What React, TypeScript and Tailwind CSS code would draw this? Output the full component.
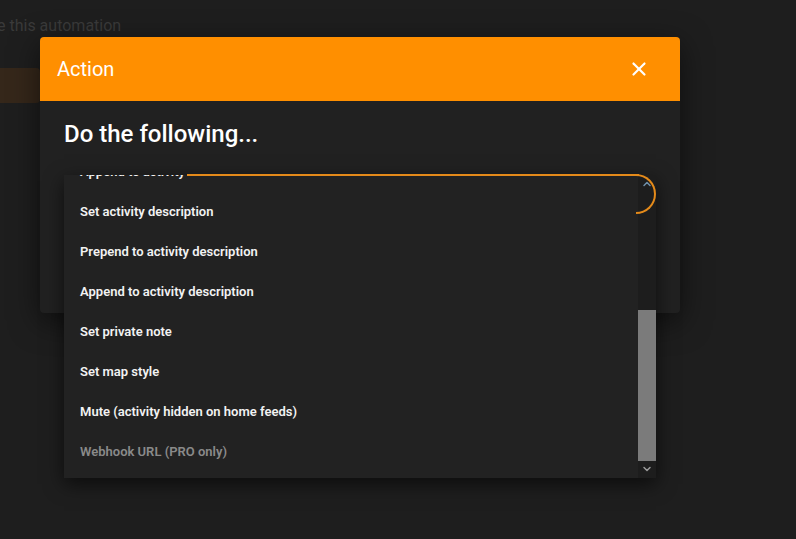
import { X, ChevronDown, ChevronUp } from "lucide-react";

const items = [
  { label: "Append to activity name" },
  { label: "Set activity description" },
  { label: "Prepend to activity description" },
  { label: "Append to activity description" },
  { label: "Set private note" },
  { label: "Set map style" },
  { label: "Mute (activity hidden on home feeds)" },
  { label: "Webhook URL (PRO only)", disabled: true },
];

export default function App() {
  return (
    <div className="relative w-[796px] h-[539px] overflow-hidden bg-[#1e1e1e] font-['Roboto',sans-serif]">
      {/* page behind the dialog, dimmed */}
      <div className="flex flex-col gap-[30px] pt-[14px]">
        <p className="-ml-[3px] text-[16px] text-[#3a3a3a]">e this automation</p>
        <div className="w-[120px] h-[35px] -ml-[80px] flex items-center justify-end pr-[46px] bg-[#35271a] text-[15px] text-[#4a3a28] rounded-sm">
          Save
        </div>
      </div>

      {/* dialog */}
      <div className="absolute left-[40px] top-[37px] w-[640px] rounded-[4px] bg-[#212121] shadow-[0_8px_30px_rgba(0,0,0,0.55)]">
        <div className="flex h-[64px] items-center justify-between rounded-t-[4px] bg-[#ff8f00] pl-[17px] pr-[30px]">
          <span className="text-[20px] text-white">Action</span>
          <X className="text-white" size={22} strokeWidth={2.4} />
        </div>
        <div className="flex flex-col px-[24px] pt-[17px] pb-[98px]">
          <h2 className="text-[24px] leading-[32px] font-medium text-white">Do the following...</h2>
          <div className="mt-[25px] h-[40px] rounded-full border-2 border-[#e48a1a]" />
        </div>
      </div>

      {/* open select menu */}
      <div className="absolute left-[64px] top-[175px] flex h-[303px] w-[592px] overflow-hidden bg-[#222222] shadow-[0_6px_18px_rgba(0,0,0,0.6)]">
        <div className="flex-1 overflow-hidden">
          <ul className="-mt-[23px] flex flex-col">
            {items.map((it) => (
              <li
                key={it.label}
                className={`flex h-[40px] items-center pl-[16px] text-[13px] font-semibold ${it.disabled ? "text-[#8a8a8a]" : "text-[#f2f2f2]"}`}
              >
                {it.label}
              </li>
            ))}
          </ul>
        </div>
        <div className="flex w-[18px] flex-col items-center bg-[#1d1d1d]">
          <ChevronUp className="mt-[3px] text-[#6f8fa8]" size={12} strokeWidth={3} />
          <div className="mt-[120px] h-[151px] w-[18px] bg-[#7b7b7b]" />
          <ChevronDown className="mt-[2px] text-[#9a9a9a]" size={12} strokeWidth={3} />
        </div>
      </div>

      {/* select outline that shows above the menu */}
      <div className="absolute left-[187px] top-[174px] h-[2px] w-[452px] bg-[#e48a1a]" />
      <div className="absolute left-[636px] top-[174px] h-[40px] w-[20px] rounded-r-full border-2 border-l-0 border-[#e48a1a]" />
    </div>
  );
}
